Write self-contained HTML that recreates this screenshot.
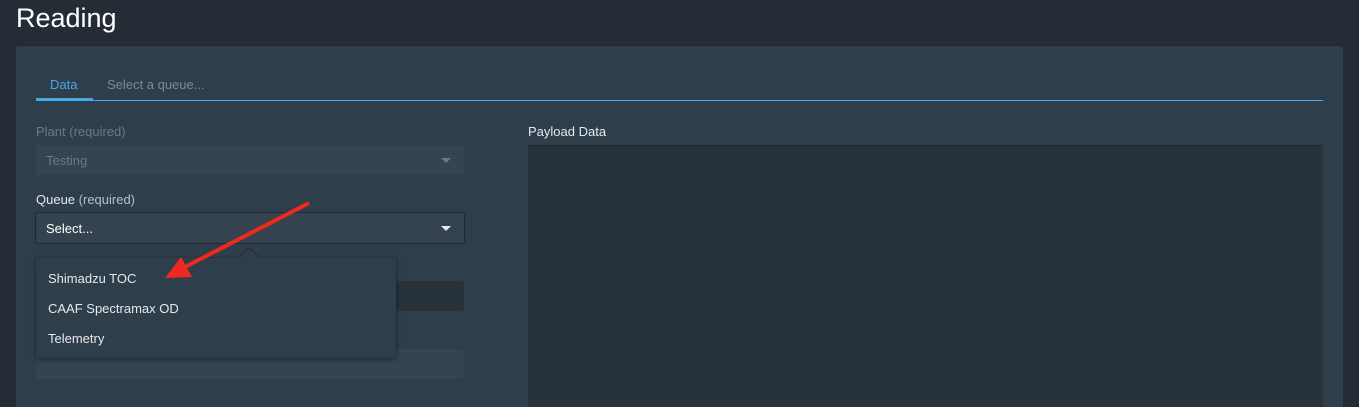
<!DOCTYPE html>
<html style="height:407px;overflow:hidden"><head><style>
body{margin:0;width:1359px;height:407px;background:#242d35;font-family:"Liberation Sans",sans-serif;overflow:hidden;position:relative;color:#e6e9ec}
.a{position:absolute}
</style></head><body>
<div class="a" style="left:16px;top:3px;font-size:27px;color:#fff">Reading</div>
<div class="a" style="left:16px;top:45px;width:1327px;height:362px;background:#2f3e4b;border-radius:3px 3px 0 0;border-top:1px solid #1f272e"></div>
<div class="a" style="left:50px;top:77px;font-size:13px;color:#4aa8e6">Data</div>
<div class="a" style="left:107px;top:77px;font-size:13px;color:#7d8a96">Select a queue...</div>
<div class="a" style="left:36px;top:100px;width:1287px;height:1px;background:#4aa8e6"></div>
<div class="a" style="left:36px;top:98px;width:57px;height:3px;background:#4aa8e6"></div>
<div class="a" style="left:36px;top:124px;font-size:13px;color:#6b7a87">Plant (required)</div>
<div class="a" style="left:36px;top:145px;width:428px;height:30px;background:#35444f;border-radius:3px"></div>
<div class="a" style="left:46px;top:153px;font-size:13px;color:#6b7a87">Testing</div>
<div class="a" style="left:441px;top:158px;border:5px solid transparent;border-top:5px solid #6b7a87;border-bottom:0"></div>
<div class="a" style="left:36px;top:192px;font-size:13px;color:#e6e9ec">Queue <span style="color:#b6c0c9">(required)</span></div>
<div class="a" style="left:35px;top:212px;width:428px;height:30px;background:#34434f;border:1px solid #1f282f;border-radius:3px"></div>
<div class="a" style="left:46px;top:221px;font-size:13px;color:#fff">Select...</div>
<div class="a" style="left:441px;top:226px;border:5px solid transparent;border-top:5px solid #e6e9ec;border-bottom:0"></div>
<div class="a" style="left:36px;top:281px;width:428px;height:30px;background:#27323b;border-radius:3px"></div>
<div class="a" style="left:36px;top:349px;width:428px;height:30px;background:#35444f;border-radius:3px"></div>
<div class="a" style="left:36px;top:258px;width:360px;height:100px;background:#2f3e4b;border-radius:3px;box-shadow:0 1px 4px rgba(0,0,0,.5)"></div>
<div class="a" style="left:243px;top:251px;width:12px;height:12px;background:#2f3e4b;transform:rotate(45deg);box-shadow:-1px -1px 2px rgba(0,0,0,.3)"></div>
<div class="a" style="left:36px;top:258px;width:360px;height:12px;background:#2f3e4b"></div>
<div class="a" style="left:48px;top:271px;font-size:13px">Shimadzu TOC</div>
<div class="a" style="left:48px;top:301px;font-size:13px">CAAF Spectramax OD</div>
<div class="a" style="left:48px;top:331px;font-size:13px">Telemetry</div>
<div class="a" style="left:528px;top:124px;font-size:13px">Payload Data</div>
<div class="a" style="left:528px;top:145px;width:795px;height:262px;background:#27323b;border-radius:3px 3px 0 0;border-top:1px solid #1e262d"></div>
<svg class="a" style="left:0;top:0" width="1359" height="407"><line x1="309" y1="203" x2="185" y2="267" stroke="#f0291e" stroke-width="4"/><polygon points="165,278 181,257 192,277" fill="#f0291e"/></svg>
</body></html>
